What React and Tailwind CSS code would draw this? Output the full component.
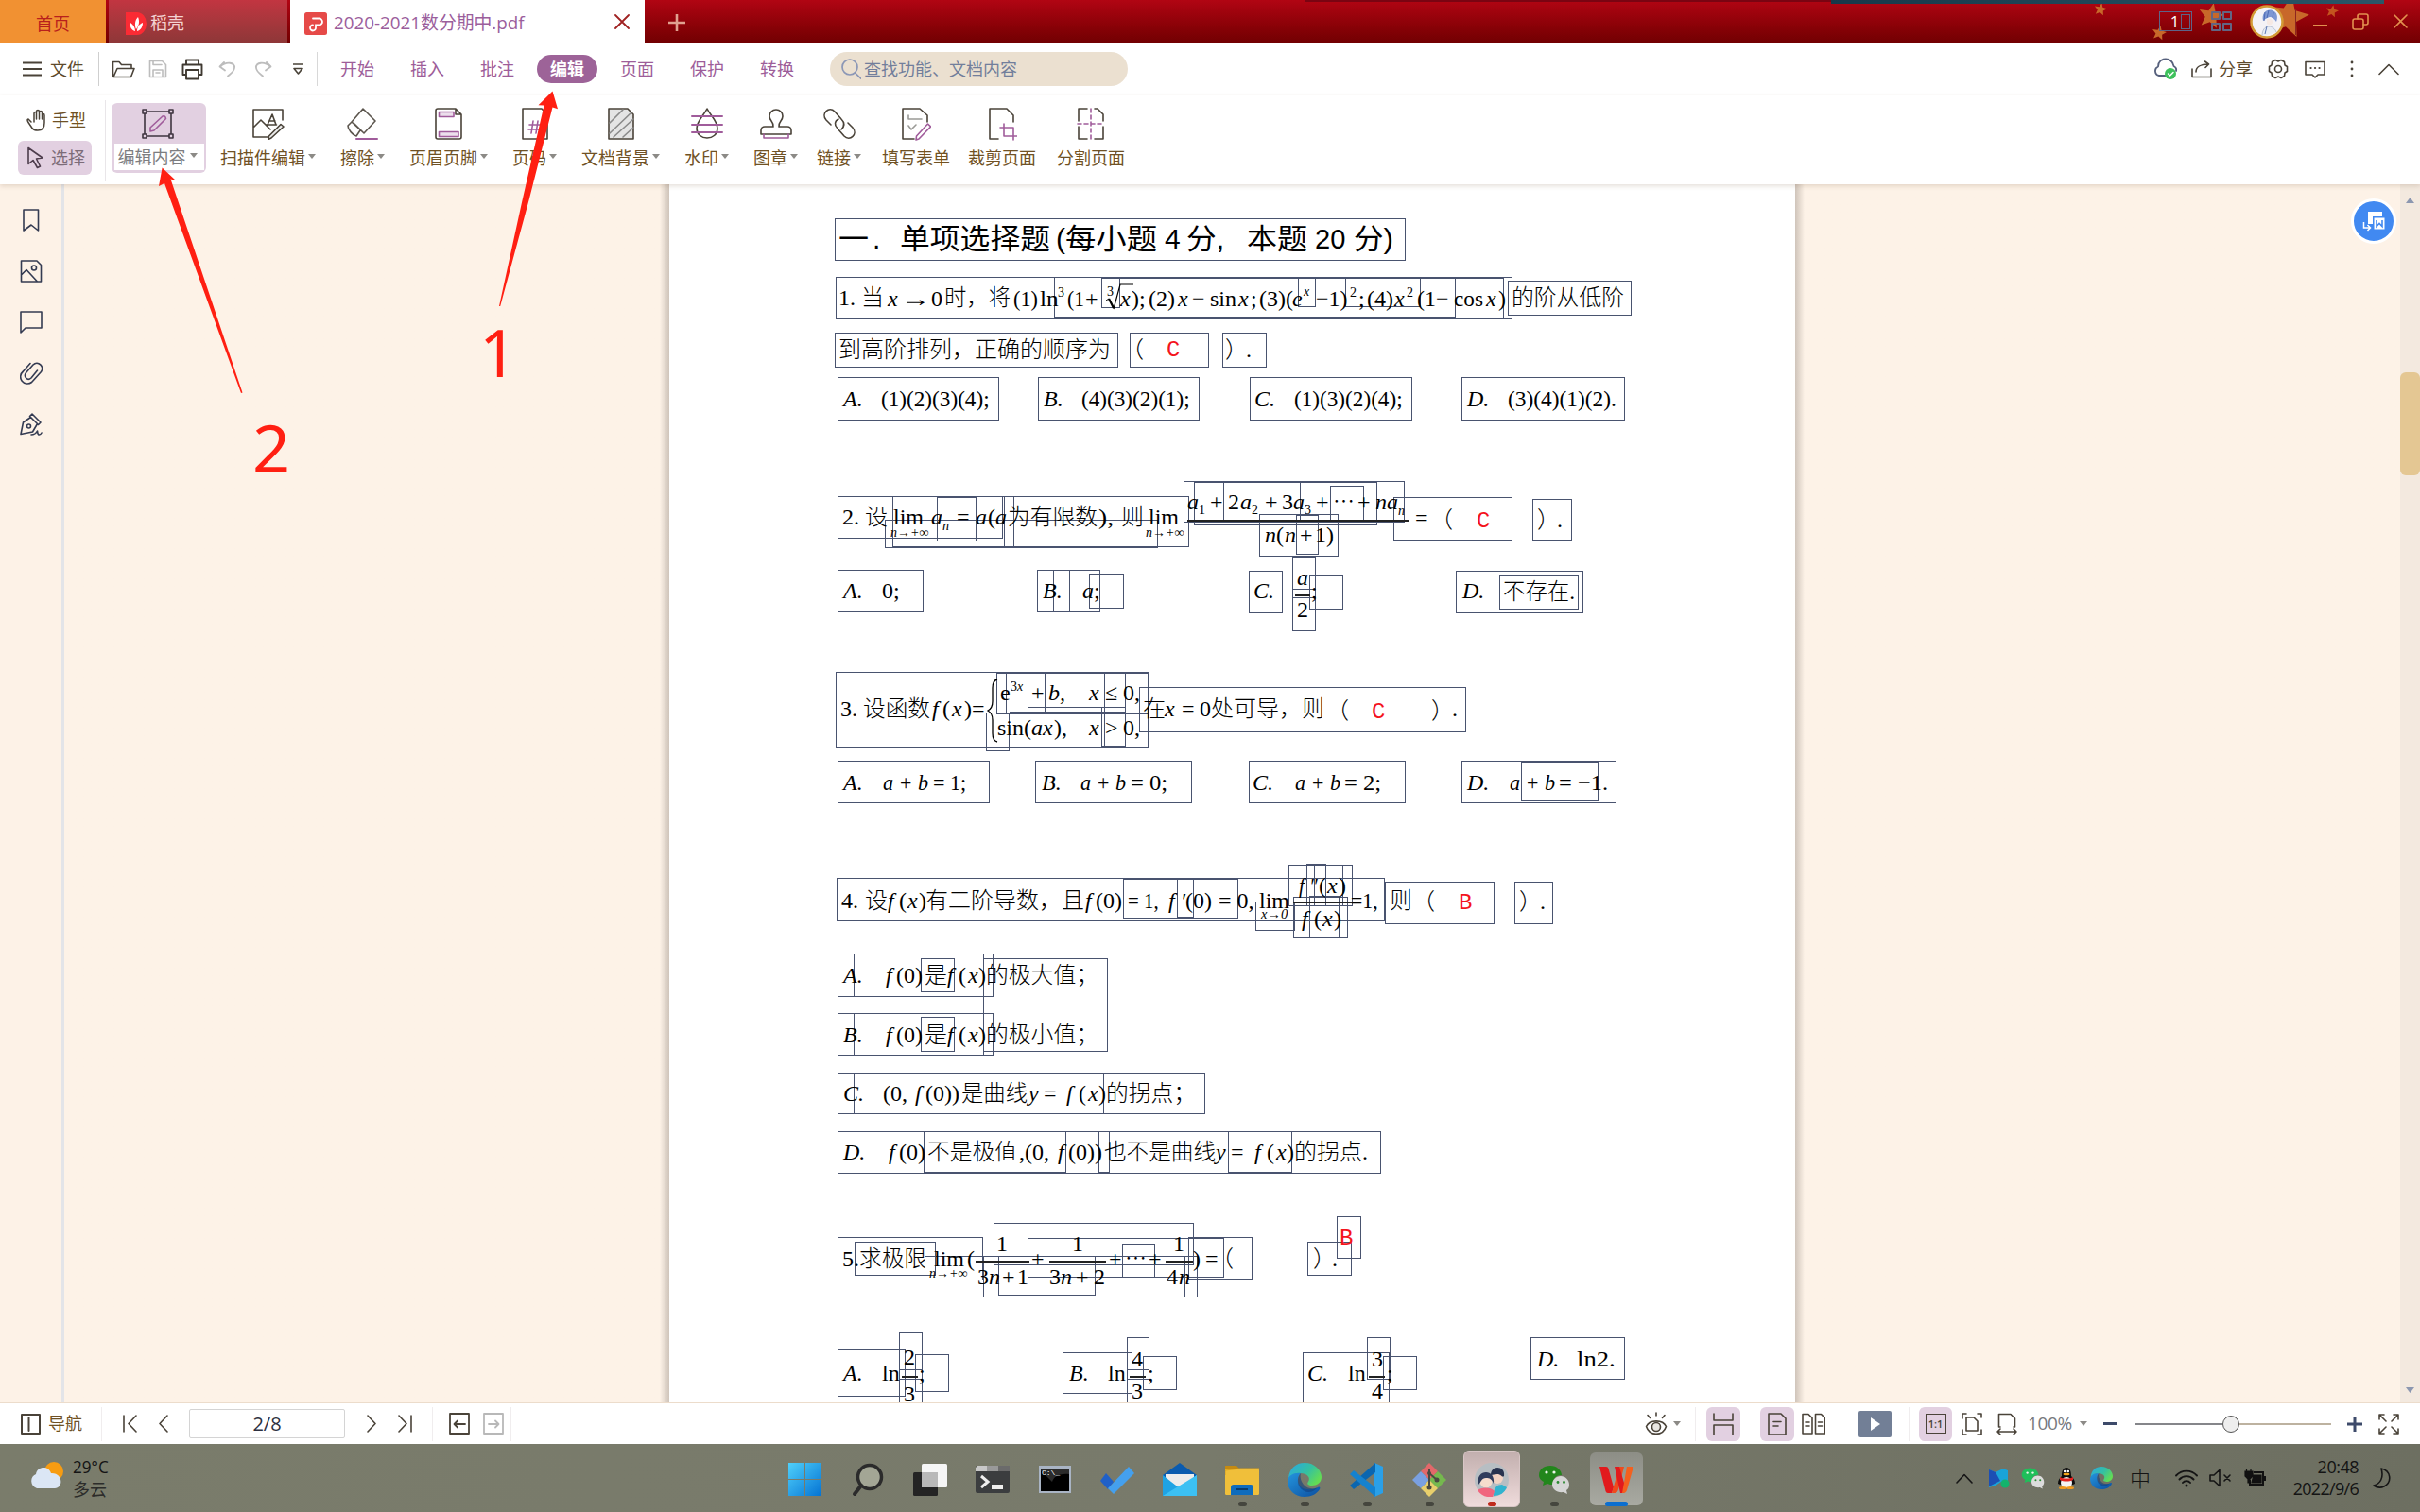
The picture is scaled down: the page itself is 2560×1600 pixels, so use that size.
import React, { useLayoutEffect, useRef } from "react";

const UI = "font-['Open_Sans','Noto_Sans_CJK_SC',sans-serif]";

/* ---------- shared helpers ---------- */

function Ico({ w = 24, h = 24, c = "#4a4339", sw = 1.6, children, className = "" }) {
  return (
    <svg width={w} height={h} viewBox={`0 0 ${w} ${h}`} fill="none" stroke={c} strokeWidth={sw} strokeLinejoin="round" strokeLinecap="round" className={"shrink-0 " + className}>
      {children}
    </svg>
  );
}

function useFit(w) {
  const ref = useRef(null);
  useLayoutEffect(() => {
    const el = ref.current;
    if (!w || !el) return;
    el.style.transform = `scaleX(${w / el.offsetWidth})`;
  }, [w]);
  return ref;
}

function Fit({ w, className = "", children }) {
  const ref = useFit(w);
  return (
    <span ref={ref} className={"inline-block origin-left whitespace-nowrap " + className}>
      {children}
    </span>
  );
}

const Caret = ({ className = "" }) => (
  <svg width="8" height="5" viewBox="0 0 8 5" className={"shrink-0 " + className}><path d="M0 0h8L4 5z" fill="#8c8a86" /></svg>
);

/* ---------- title bar ---------- */

const STARS = [[2222, 10, 7], [2284, 35, 8], [2339, 17, 14], [2420, 18, 23], [2467, 12, 7]];
const starPath = (cx, cy, r) =>
  Array.from({ length: 10 }, (_, i) => {
    const a = (Math.PI / 5) * i - Math.PI / 2 + 0.2;
    const q = i % 2 ? r * 0.45 : r;
    return `${cx + q * Math.cos(a)},${cy + q * Math.sin(a)}`;
  }).join(" ");

function TitleBar() {
  return (
    <div className="relative flex h-[45px] shrink-0 bg-linear-to-b from-[#b10513] to-[#720002]">
      <svg width="500" height="45" viewBox="2060 0 500 45" className="absolute right-0 top-0">
        {STARS.map((s, i) => <polygon key={i} points={starPath(...s)} fill={i === 4 ? "#c4541f" : "#c8682a"} />)}
      </svg>
      <div className="absolute left-[1381px] top-0 h-[2px] w-[556px] bg-[#7a0412]" />
      <div className="absolute left-[1937px] top-0 h-[4px] w-[585px] bg-linear-to-r from-[#17384a] to-[#2a5668]" />
      <div className="flex w-[112px] items-center justify-center bg-[#f19132] pt-1.5 text-[18px] text-[#b8201c]">首页</div>
      <div className="ml-[3px] flex w-[189px] items-center bg-linear-to-b from-[#c23541] to-[#8e3738] pl-[18px] pt-1">
        <svg width="22" height="24" viewBox="0 0 22 24" className="shrink-0">
          <path d="M0 0h12a10 12 0 0 1 0 24H0z" fill="#fb2b34" />
          <path d="M10 20c-4-1-6-5-5-9 3 2 5 5 5 9zM11 18c-2-5-1-10 2-13 2 5 1 9-2 13zM12 20c0-5 3-8 6-9 0 4-2 8-6 9z" fill="#fff" />
        </svg>
        <span className="ml-1 text-[18px] text-[#f4d3d3]">稻壳</span>
      </div>
      <div className="ml-[3px] flex w-[375px] items-center bg-white pl-[15px] pt-1">
        <svg width="24" height="24" viewBox="0 0 24 24" className="shrink-0">
          <rect width="24" height="24" rx="2.5" fill="#e64a48" />
          <path d="M8 5.500h6.500a3.500 3.500 0 0 1 0 7H11v2.500a3 3 0 1 1-3-2.500" fill="none" stroke="#fff" strokeWidth="1.8" strokeLinecap="round" transform="translate(1 1)" />
        </svg>
        <Fit w={202} className="ml-[7px] text-[19px] text-[#9b5e9c]">2020-2021数分期中.pdf</Fit>
        <Ico w={16} h={16} c="#a02222" sw={1.8} className="-mt-1 ml-auto mr-[16px]"><path d="M1 1l14 14M15 1L1 15" /></Ico>
      </div>
      <Ico w={20} h={20} c="#e0a190" sw={2.6} className="ml-6 mt-[14px]"><path d="M10 1v18M1 10h18" strokeLinecap="butt" /></Ico>
      <div className="relative ml-auto flex items-center pr-[13px]">
        <div className="relative flex h-[21px] w-[35px] items-center justify-center border border-[#5d6488] text-[17px] text-white">
          <span className="pr-0.5">1</span>
          <span className="absolute right-px top-0.5 h-4 w-[10px] border border-[#5d6488]" />
        </div>
        <Ico w={22} h={21} c="#626584" sw={2} className="ml-5"><path d="M1 1h8v7H1zM13 1h8v7h-8zM1 13h8v7H1zM13 13h8v7h-8z" /></Ico>
        <svg width="36" height="36" viewBox="0 0 36 36" className="ml-[19px] shrink-0">
          <circle cx="18" cy="18" r="16.500" fill="#f4f2f6" stroke="#d39a35" strokeWidth="2.500" />
          <path d="M14 17C12 9 18 4 24 6c5 2 6 7 4 12-2-3-4-5-7-5-3 1-5 2-7 4z" fill="#7d97d3" />
          <path d="M16 8l-1 9M20 6l-2 8M25 8l-1 6" stroke="#4c69b4" />
          <path d="M18 15c4-1 7 1 6 4s-4 3-6 1z" fill="#f6e9e4" />
          <path d="M13 33c0-6 3-10 7-10s7 3 8 6" fill="#e9edf4" stroke="#b7c0d2" />
          <path d="M18 23l-2 8" stroke="#5a75b4" />
        </svg>
        <div className="ml-3 h-7 w-px bg-[#8d2620]" />
        <Ico w={15} h={16} c="#e2914f" sw={1.8} className="ml-[18px]"><path d="M0 12h15" /></Ico>
        <Ico w={18} h={18} c="#e2914f" className="ml-[26px]"><rect x="1" y="6" width="11" height="11" rx="2" /><path d="M6 6V3a2 2 0 0 1 2-2h7a2 2 0 0 1 2 2v7a2 2 0 0 1-2 2h-3" /></Ico>
        <Ico w={15} h={15} c="#e2914f" className="ml-[26px]"><path d="M1 1l13 13M14 1L1 14" /></Ico>
      </div>
    </div>
  );
}

/* ---------- menu row ---------- */

const MENUS = ["开始", "插入", "批注", "编辑", "页面", "保护", "转换"];

function MenuRow() {
  return (
    <div className="flex h-[56px] shrink-0 items-center bg-white text-[18px] text-[#5e4a2c]">
      <Ico w={20} h={16} className="ml-6" sw={1.8}><path d="M0 1.500h20M0 8h20M0 14.500h20" /></Ico>
      <span className="ml-[9px]">文件</span>
      <div className="ml-[15px] h-9 w-px bg-[#cfcfcf]" />
      <Ico w={25} h={20} className="ml-[13px]"><path d="M1.500 18V2.500h6.500l2.500 3H21v4M2 18.500L6 9.500h18L20.500 18.500z" /></Ico>
      <Ico w={20} h={20} c="#bdbdbd" className="ml-[14px]"><path d="M1.500 1.500h13l4 4v13h-17zM5 1.500v4h9M5 18.500V11h10v7.500M8 14h4" /></Ico>
      <Ico w={23} h={23} c="#3f3931" sw={1.9} className="ml-[15px]"><path d="M5 6V1.500h13V6M5 17H1.500V6.500h20V17H18M5 12h13v9.500H5z" /></Ico>
      <Ico w={19} h={18} c="#bdbdbd" sw={1.8} className="ml-[16px]"><path d="M6 2L1.500 6.500 7 10.500M2 6.500C8 1 18 1.500 17 8c-.500 4-4 6-7 8.500" /></Ico>
      <Ico w={19} h={18} c="#bdbdbd" sw={1.8} className="ml-[19px]"><path d="M13 2l4.500 4.500L12 10.500M17 6.500C11 1 1 1.500 2 8c.500 4 4 6 7 8.500" /></Ico>
      <Ico w={11} h={12} className="ml-[22px]"><path d="M0 1h11M1 5.500h9L5.500 11z" /></Ico>
      <div className="ml-[14px] h-9 w-px bg-[#d8d8d8]" />
      <div className="ml-[5px] flex">
        {MENUS.map((m) => (
          <div key={m} className="flex w-[74px] justify-center">
            {m === "编辑" ? (
              <span className="flex h-[30px] w-[64px] items-center justify-center rounded-full bg-[#9d6398] font-bold text-white">{m}</span>
            ) : (
              <span className="flex h-[30px] items-center text-[#9d5d99]">{m}</span>
            )}
          </div>
        ))}
      </div>
      <div className="ml-[19px] flex h-9 w-[315px] items-center rounded-full bg-[#ebe0d0] pl-3 text-[#727e9b]">
        <Ico w={21} h={22} c="#8b97b6" sw={1.7}><circle cx="9" cy="9" r="8" /><path d="M14.500 15l6 6" /></Ico>
        <span className="ml-[3px]">查找功能、文档内容</span>
      </div>
      <Ico w={26} h={24} c="#56607c" sw={1.8} className="ml-auto">
        <path d="M13 19H6a5 5 0 0 1-1-9.500C5 4 9 1.500 13 1.500s8 3 8.500 7.500c2 1 3 3 2.500 5" />
        <circle cx="18" cy="17" r="6" fill="#3ec15c" stroke="none" /><path d="M15.500 17l2 2 3.500-3.500" stroke="#fff" strokeWidth="1.500" />
      </Ico>
      <Ico w={22} h={19} className="ml-[14px]"><path d="M1 9v8.500h20V9M5 12c0-5 5-8 13-8M14.500 1L18.500 4l-3.500 3.500" /></Ico>
      <span className="ml-[7px]">分享</span>
      <Ico w={22} h={22} className="ml-[16px]"><path d="M8 1.500l3 1.500 3-1.500 3.500 2 .500 3.500 2.500 1.500v5L18 15l-.500 3.500-3.500 2-3-1.500-3 1.500-3.500-2L4 15l-2.500-1.500v-5L4 7l.500-3.500z" /><circle cx="11" cy="11" r="3.500" /></Ico>
      <Ico w={22} h={19} className="ml-[17px]"><path d="M1 1.500h20V15h-7l-3 3-3-3H1z" /><path d="M6.500 8h.100M11 8h.100M15.500 8h.100" strokeWidth="2.200" /></Ico>
      <Ico w={4} h={18} sw={2.800} className="ml-[26px]"><path d="M2 2h.010M2 9h.010M2 16h.010" /></Ico>
      <Ico w={22} h={13} className="ml-[26px] mr-[22px]"><path d="M1 11.500L11 1.500l10 10" /></Ico>
    </div>
  );
}

/* ---------- ribbon ---------- */

const P = "#a05c9b";
const RIBBON = [
  { t: "扫描件编辑", caret: true, box: "w-[102px]", icon: <Ico w={36} h={34}><path d="M18 31H2V2h31v11M2 21l8-8 10 10M17 18l5-11 4 11M15.500 18h11M19 14h6" /><path d="M21 32l-3 1.500.500-3.500L31 17.500l3 2.500z" fill="#ececec" /></Ico> },
  { t: "擦除", caret: true, box: "ml-[25px] w-[47px]", icon: <Ico w={36} h={34} c="#5c564e"><path d="M18 1l13 13-12 13L6 15zM6 15l-4 4c0 4 5 10 9 11l4-6M9 17l9 9" /><path d="M11 33h22" stroke={P} strokeWidth="2" /></Ico> },
  { t: "页眉页脚", caret: true, box: "ml-[26px] w-[83px]", icon: <Ico w={30} h={34}><path d="M3 1h19l6 6v24a2 2 0 0 1-2 2H3a2 2 0 0 1-2-2V3a2 2 0 0 1 2-2zM22 1v6h6" /><path d="M4.500 4.500H20v5H4.500zM4.500 25.500H25v5H4.500z" stroke={P} fill="#ecdfec" /></Ico> },
  { t: "页码", caret: true, box: "ml-[26px] w-[47px]", icon: <Ico w={30} h={34}><path d="M2 1h20l6 6v26H2z" /><path d="M13 14l-2 13M18 14l-2 13M9 18h12M8 23h12" stroke={P} /></Ico> },
  { t: "文档背景", caret: true, box: "ml-[26px] w-[83px]", icon: <Ico w={30} h={34}><path d="M2 1h20l6 6v26H2z" fill="#e4e4e4" /><path d="M3 16L17 2M3 27L26 5M7 31L28 12M17 31l11-10" stroke="#8a8a8a" /></Ico> },
  { t: "水印", caret: true, box: "ml-[26px] w-[47px]", icon: <Ico w={36} h={34}><path d="M18 1c4 8 11 13 11 21 0 6-5 10-11 10S7 28 7 22C7 14 14 9 18 1z" /><path d="M2 9h32M2 18h32M2 26h32" stroke={P} strokeWidth="2" /></Ico> },
  { t: "图章", caret: true, box: "ml-[26px] w-[47px]", icon: <Ico w={36} h={34}><path d="M15 20c1-5-4-6-4-11 0-4 3-7 7-7s7 3 7 7c0 5-5 6-4 11h9a4 4 0 0 1 4 4v4H2v-4a4 4 0 0 1 4-4z" /><path d="M5 28v4h26v-4" stroke={P} /></Ico> },
  { t: "链接", caret: true, box: "ml-[20px] w-[47px]", icon: <Ico w={36} h={34}><path d="M9 18l-5-5C-2 6 7-2 13 4l7 8c4 4 3 8 0 11M27 16l5 5c6 7-3 15-9 9l-7-8c-4-4-3-8 1-10" /></Ico> },
  { t: "填写表单", box: "ml-[22px] w-[72px]", icon: <Ico w={32} h={35}><path d="M14 33H2V1h18l8 7v7" /><path d="M8 8v4h14M8 19l3 4 5-5" stroke="#9a9a96" /><path d="M19 33l-3 1 .500-4 12-13 3 3z" stroke={P} /></Ico> },
  { t: "裁剪页面", box: "ml-[19px] w-[72px]", icon: <Ico w={32} h={35}><path d="M12 33H3V1h18l7 7v7" /><path d="M18 17v13h14M14 21h14v13" stroke={P} /></Ico> },
  { t: "分割页面", box: "ml-[22px] w-[72px]", icon: <Ico w={30} h={34}><path d="M11 1H2v13M2 20v13h9M19 1h3l6 6v7M28 20v13h-9" /><path d="M15 1v32M1 17h28" stroke={P} strokeDasharray="4 3" /></Ico> },
];

function Ribbon() {
  return (
    <div className="z-10 flex h-[94px] shrink-0 bg-white text-[18px] text-[#6f5124] shadow-[0_2px_5px_rgba(110,80,50,0.18)]">
      <div className="ml-[19px] flex w-[78px] flex-col">
        <div className="mt-2 flex h-[36px] items-center pl-2">
          <Ico w={22} h={24} sw={1.5}><path d="M5 14l-3-3c-1.500 0-1 2 0 3.500l4 6c1 1.500 3 2.500 6 2.500 5 0 7-3 7-8V7c0-2-2.500-2-2.500 0v4V4c0-2-3-2-3 0v7V3c0-2-3-2-3 0v8V5c0-2-2.500-2-2.500 0v9" transform="translate(1 0)" /></Ico>
          <span className="ml-[6px]">手型</span>
        </div>
        <div className="mt-[4px] flex h-[36px] items-center rounded-md bg-[#e2d0e1] pl-[9px]">
          <Ico w={20} h={24} c="#4d3c4c"><path d="M2 1.500v17l5-4 4.500 8 3-1.500-4-8L17 12z" /></Ico>
          <span className="ml-[6px] text-[#7c6c78]">选择</span>
        </div>
      </div>
      <div className="ml-[14px] mt-[5px] h-[86px] w-px bg-[#e9e6e9]" />
      <div className="ml-[6px] mt-2 flex h-[74px] w-[100px] flex-col items-center rounded-md bg-[#e2d0e1]">
        <Ico w={34} h={32} c="#3f3540" className="-ml-0.5 mb-[5px] mt-[6px]">
          <path d="M3 3h28v26H3z" /><path d="M1 1h4v4H1zM29 1h4v4h-4zM1 27h4v4H1zM29 27h4v4h-4z" fill="#e2d0e1" />
          <path d="M9 24v-4L22 8q3-1 3.500 2.500L13 23z" stroke={P} />
        </Ico>
        <div className="flex h-[28px] w-[95px] items-center bg-white pl-1 text-[#7d7d80]">编辑内容<Caret className="mb-1 ml-[4px]" /></div>
      </div>
      <div className="ml-[15px] flex">
        {RIBBON.map((r) => (
          <div key={r.t} className={"flex flex-col items-center " + r.box}>
            <div className="mt-[12px] flex h-[36px] items-center justify-center">{r.icon}</div>
            <div className="mt-[4px] flex h-[28px] w-full items-center whitespace-nowrap">{r.t}{r.caret && <Caret className="mb-1 ml-[3px]" />}</div>
          </div>
        ))}
      </div>
    </div>
  );
}

/* ---------- document page (free canvas of editable objects) ---------- */

const BOXES = [
  [883, 231, 1487, 276], [884, 293, 1600, 338], [1115, 293, 1540, 336], [1165, 294, 1185, 326], [1179, 294, 1591, 338], [1373, 294, 1392, 325], [1423, 294, 1503, 325], [1595, 297, 1726, 334],
  [883, 352, 1183, 389], [1195, 352, 1279, 389], [1293, 352, 1340, 389],
  [886, 399, 1057, 445], [1098, 399, 1269, 445], [1322, 399, 1494, 445], [1546, 399, 1719, 445],
  [886, 525, 1061, 570], [944, 525, 1073, 579], [991, 526, 1033, 573], [936, 550, 1225, 580], [1062, 525, 1258, 579], [1252, 509, 1486, 553], [1263, 510, 1457, 556], [1294, 509, 1376, 553], [1407, 514, 1443, 551], [1332, 544, 1416, 589], [1371, 545, 1395, 587], [1474, 526, 1600, 572], [1621, 528, 1663, 572],
  [886, 603, 977, 648], [1097, 603, 1164, 648], [1114, 603, 1132, 648], [1152, 607, 1189, 644], [1321, 604, 1357, 649], [1367, 589, 1392, 668], [1367, 623, 1392, 633], [1385, 608, 1421, 645], [1540, 604, 1675, 649], [1586, 608, 1670, 645],
  [884, 711, 1215, 792], [1054, 712, 1191, 756], [1064, 712, 1215, 756], [1105, 712, 1169, 756], [1087, 748, 1169, 792], [1165, 748, 1191, 790], [1043, 754, 1068, 795], [1068, 753, 1191, 755], [1205, 727, 1551, 775],
  [886, 805, 1047, 850], [1095, 805, 1261, 850], [1321, 805, 1487, 850], [1546, 805, 1710, 850], [1609, 806, 1691, 848],
  [885, 929, 1465, 975], [1188, 930, 1310, 972], [1245, 929, 1263, 971], [1328, 954, 1370, 985], [1363, 915, 1431, 959], [1382, 914, 1403, 959], [1390, 915, 1421, 959], [1368, 949, 1426, 993], [1385, 948, 1417, 993], [1465, 933, 1581, 978], [1602, 933, 1643, 978],
  [886, 1009, 1051, 1055], [903, 1009, 1041, 1055], [974, 1014, 1010, 1050], [1040, 1014, 1172, 1113],
  [886, 1072, 1051, 1117], [903, 1072, 1041, 1117], [974, 1076, 1010, 1113],
  [886, 1135, 1275, 1179], [903, 1135, 1168, 1179],
  [886, 1197, 1461, 1242], [977, 1197, 1128, 1241], [1162, 1197, 1174, 1241], [1299, 1197, 1367, 1241],
  [886, 1309, 1040, 1355], [904, 1314, 990, 1350], [978, 1329, 1267, 1373], [1051, 1294, 1263, 1339], [1040, 1329, 1254, 1373], [1056, 1329, 1159, 1371], [1087, 1310, 1295, 1352], [1187, 1316, 1222, 1352], [1257, 1309, 1325, 1354], [1383, 1314, 1430, 1350], [1414, 1287, 1440, 1332],
  [886, 1428, 958, 1478], [951, 1410, 976, 1500], [951, 1449, 976, 1460], [968, 1433, 1004, 1473],
  [1124, 1431, 1198, 1475], [1192, 1415, 1216, 1500], [1192, 1449, 1216, 1460], [1209, 1435, 1245, 1471],
  [1378, 1431, 1470, 1500], [1446, 1415, 1471, 1460], [1463, 1435, 1499, 1471], [1619, 1415, 1719, 1460],
];

/* [text, left, baseline, style, width?]; styles: r roman, i italic, c red answer, h heading, s small roman, n small italic */
const TEXT = [
  ["一", 887, 264, "h", 32], [".", 923, 264, "h"], ["单项选择题", 952, 264, "h", 159], ["(", 1117, 264, "h"], ["每小题", 1127, 264, "h", 97], ["4", 1232, 264, "h"], ["分,", 1255, 264, "h", 40], ["本题", 1319, 264, "h", 64], ["20", 1391, 264, "h", 32], ["分)", 1432, 264, "h", 42],

  ["1.", 887, 324, "r"], ["当", 911, 324, "r"], ["x", 939, 325, "i"], ["→", 953, 325, "r", 31], ["0", 985, 325, "r"], ["时，将", 999, 324, "r", 70], ["(1)", 1072, 325, "r", 26], ["ln", 1100, 325, "r", 20], ["3", 1119, 315, "s"], ["(1", 1129, 325, "r", 18], ["+", 1148, 325, "r"], ["3", 1171, 314, "s"], ["x", 1185, 325, "i"], [");", 1197, 325, "r"],
  ["(2)", 1215, 325, "r"], ["x", 1246, 325, "i"], ["−", 1261, 325, "r"], ["sin", 1280, 325, "r"], ["x", 1310, 325, "i"], [";", 1323, 325, "r"], ["(3)(", 1332, 325, "r", 36], ["e", 1367, 325, "i"], ["x", 1379, 314, "n"], ["−1)", 1392, 325, "r", 34], ["2", 1428, 315, "s"], [";", 1437, 325, "r"], ["(4)", 1446, 325, "r"], ["x", 1475, 325, "i"], ["2", 1488, 315, "s"], ["(1−", 1499, 325, "r"], ["cos", 1538, 325, "r", 31], ["x", 1572, 325, "i"], [")", 1585, 325, "r"], ["的阶从低阶", 1599, 324, "r", 119],
  ["到高阶排列，正确的顺序为", 887, 379, "r", 288], ["（", 1186, 379, "r"], ["C", 1234, 378, "c"], ["）", 1296, 379, "r"], [".", 1318, 379, "r"],
  ["A.", 892, 431, "i"], ["(1)(2)(3)(4);", 932, 431, "r", 115], ["B.", 1104, 431, "i"], ["(4)(3)(2)(1);", 1144, 431, "r", 115], ["C.", 1327, 431, "i"], ["(1)(3)(2)(4);", 1369, 431, "r", 115], ["D.", 1552, 431, "i"], ["(3)(4)(1)(2).", 1595, 431, "r", 115],

  ["2.", 891, 556, "r"], ["设", 915, 556, "r"], ["lim", 945, 556, "r"], ["n→+∞", 942, 569, "n", 40], ["a", 985, 556, "i"], ["n", 997, 562, "n"], ["=", 1012, 556, "r"], ["a", 1032, 556, "i"], ["(", 1045, 556, "r"], ["a", 1053, 556, "i"], ["为有限数", 1066, 556, "r", 95], ["),", 1162, 556, "r", 16], ["则", 1186, 556, "r"], ["lim", 1215, 556, "r"], ["n→+∞", 1212, 569, "n", 40],
  ["a", 1256, 540, "i"], ["1", 1268, 545, "s"], ["+", 1280, 540, "r"], ["2", 1299, 540, "r"], ["a", 1312, 540, "i"], ["2", 1324, 545, "s"], ["+", 1338, 540, "r"], ["3", 1356, 540, "r"], ["a", 1368, 540, "i"], ["3", 1380, 545, "s"], ["+", 1392, 540, "r"], ["⋯", 1410, 540, "r", 23], ["+", 1436, 540, "r"], ["na", 1455, 540, "i"], ["n", 1479, 546, "n"],
  ["n", 1338, 575, "i"], ["(", 1350, 575, "r"], ["n", 1359, 575, "i"], ["+", 1375, 575, "r"], ["1)", 1391, 575, "r"],
  ["=", 1497, 557, "r"], ["（", 1513, 559, "r"], ["C", 1562, 559, "c"], ["）", 1626, 559, "r"], [".", 1647, 559, "r"],
  ["A.", 892, 634, "i"], ["0;", 933, 634, "r"], ["B.", 1103, 634, "i"], ["a", 1145, 634, "i"], [";", 1157, 634, "r"], ["C.", 1326, 634, "i"], ["a", 1372, 620, "i"], ["2", 1372, 654, "r"], [";", 1387, 634, "r"], ["D.", 1547, 634, "i"], ["不存在.", 1590, 635, "r", 76],

  ["3.", 889, 759, "r"], ["设函数", 913, 759, "r", 71], ["f", 986, 759, "i"], ["(", 997, 759, "r"], ["x", 1007, 759, "i"], [")=", 1020, 759, "r"], ["e", 1058, 742, "r"], ["3", 1069, 732, "s"], ["x", 1076, 732, "n"], ["+", 1091, 742, "r"], ["b,", 1109, 742, "i"], ["x", 1152, 742, "i"], ["≤", 1169, 742, "r"], ["0,", 1188, 742, "r"],
  ["sin(", 1055, 779, "r", 36], ["ax", 1091, 779, "i"], ["),", 1115, 779, "r"], ["x", 1152, 779, "i"], [">", 1169, 779, "r"], ["0,", 1188, 779, "r"],
  ["在", 1209, 759, "r"], ["x", 1232, 759, "i"], ["=", 1250, 759, "r"], ["0", 1269, 759, "r"], ["处可导，则", 1281, 759, "r", 120], ["（", 1403, 761, "r"], ["C", 1451, 761, "c"], ["）", 1514, 761, "r"], [".", 1536, 759, "r"],
  ["A.", 892, 837, "i"], ["a + b", 934, 837, "i", 48], ["= 1;", 987, 837, "r", 35], ["B.", 1102, 837, "i"], ["a + b", 1143, 837, "i", 48], ["= 0;", 1196, 837, "r", 39], ["C.", 1325, 837, "i"], ["a + b", 1370, 837, "i", 48], ["= 2;", 1422, 837, "r", 39], ["D.", 1552, 837, "i"], ["a + b", 1597, 837, "i", 48], ["= −1.", 1649, 837, "r", 52],

  ["4.", 890, 962, "r"], ["设", 915, 962, "r"], ["f", 939, 962, "i"], ["(", 951, 962, "r"], ["x", 960, 962, "i"], [")", 972, 962, "r"], ["有二阶导数，且", 979, 962, "r", 168], ["f", 1148, 962, "i"], ["(0)", 1159, 962, "r"], ["= 1,", 1193, 962, "r", 33], ["f ′", 1236, 962, "i", 18], ["(0)", 1254, 962, "r"], ["= 0,", 1289, 962, "r", 38], ["lim", 1332, 962, "r"], ["x→0", 1334, 973, "n", 28],
  ["f ″", 1374, 946, "i", 20], ["(", 1395, 946, "r"], ["x", 1404, 946, "i"], [")", 1416, 946, "r"], ["f", 1377, 981, "i"], ["(", 1390, 981, "r"], ["x", 1399, 981, "i"], [")", 1411, 981, "r"], ["=1,", 1429, 962, "r", 29], ["则", 1470, 962, "r"], ["（", 1494, 963, "r"], ["B", 1543, 963, "c"], ["）", 1607, 963, "r"], [".", 1629, 963, "r"],

  ["A.", 892, 1041, "i"], ["f", 937, 1041, "i"], ["(0)", 948, 1041, "r"], ["是", 978, 1041, "r"], ["f", 1002, 1041, "i"], ["(", 1014, 1041, "r"], ["x", 1024, 1041, "i"], [")", 1035, 1041, "r"], ["的极大值；", 1043, 1041, "r", 119],
  ["B.", 892, 1104, "i"], ["f", 937, 1104, "i"], ["(0)", 948, 1104, "r"], ["是", 978, 1104, "r"], ["f", 1002, 1104, "i"], ["(", 1014, 1104, "r"], ["x", 1024, 1104, "i"], [")", 1035, 1104, "r"], ["的极小值；", 1043, 1104, "r", 119],
  ["C.", 892, 1166, "i"], ["(0,", 934, 1166, "r"], ["f", 968, 1166, "i"], ["(0))", 979, 1166, "r"], ["是曲线", 1017, 1166, "r", 70], ["y", 1088, 1166, "i"], ["=", 1104, 1166, "r"], ["f", 1128, 1166, "i"], ["(", 1141, 1166, "r"], ["x", 1151, 1166, "i"], [")", 1162, 1166, "r"], ["的拐点；", 1170, 1166, "r", 95],
  ["D.", 892, 1228, "i"], ["f", 940, 1228, "i"], ["(0)", 951, 1228, "r"], ["不是极值", 981, 1228, "r", 95], [",", 1078, 1228, "r"], ["(0,", 1084, 1228, "r"], ["f", 1119, 1228, "i"], ["(0))", 1130, 1228, "r"], ["也不是曲线", 1168, 1228, "r", 118], ["y", 1286, 1228, "i"], ["=", 1302, 1228, "r"], ["f", 1327, 1228, "i"], ["(", 1340, 1228, "r"], ["x", 1350, 1228, "i"], [")", 1361, 1228, "r"], ["的拐点.", 1369, 1228, "r", 78],

  ["5.", 891, 1341, "r"], ["求极限", 909, 1341, "r", 71], ["lim", 988, 1341, "r"], ["n→+∞", 983, 1353, "n", 40], ["(", 1023, 1341, "r"], ["1", 1054, 1325, "r"], ["3", 1034, 1360, "r"], ["n", 1046, 1360, "i"], ["+", 1060, 1360, "r"], ["1", 1076, 1360, "r"], ["+", 1091, 1341, "r"], ["1", 1134, 1325, "r"], ["3", 1110, 1360, "r"], ["n", 1122, 1360, "i"], ["+", 1138, 1360, "r"], ["2", 1157, 1360, "r"], ["+", 1173, 1341, "r"], ["⋯", 1190, 1341, "r", 23], ["+", 1215, 1341, "r"], ["1", 1241, 1325, "r"], ["4", 1234, 1360, "r"], ["n", 1247, 1360, "i"], [")", 1262, 1341, "r"], ["=", 1275, 1341, "r"], ["（", 1281, 1341, "r"], ["）", 1389, 1341, "r"], [".", 1409, 1341, "r"], ["B", 1417, 1318, "c"],
  ["A.", 892, 1462, "i"], ["ln", 933, 1462, "r"], ["2", 956, 1445, "r"], ["3", 956, 1484, "r"], [";", 972, 1462, "r"],
  ["B.", 1131, 1462, "i"], ["ln", 1172, 1462, "r"], ["4", 1197, 1447, "r"], ["3", 1197, 1481, "r"], [";", 1214, 1462, "r"],
  ["C.", 1383, 1462, "i"], ["ln", 1426, 1462, "r"], ["3", 1451, 1447, "r"], ["4", 1451, 1481, "r"], [";", 1467, 1462, "r"],
  ["D.", 1626, 1447, "i"], ["ln2.", 1668, 1447, "r", 41],
];

const RULES = [[1256, 550, 235], [1370, 629, 16], [1368, 954, 62], [1032, 1334, 57], [1110, 1334, 60], [1233, 1334, 29], [954, 1456, 17], [1195, 1456, 17], [1448, 1456, 17]];

const STYLES = {
  r: { cls: "font-['Liberation_Serif','Noto_Sans_CJK_SC',serif] font-light", k: 0.3375, s: 24 },
  i: { cls: "font-['Liberation_Serif','Noto_Sans_CJK_SC',serif] italic", k: 0.3375, s: 24 },
  s: { cls: "font-['Liberation_Serif',serif]", k: 0.3375, s: 14 },
  n: { cls: "font-['Liberation_Serif',serif] italic", k: 0.3375, s: 14 },
  h: { cls: "font-['Liberation_Sans','Noto_Sans_CJK_SC',sans-serif] font-normal", k: 0.3465, s: 30 },
  c: { cls: "font-['Liberation_Mono',monospace] text-[#f4141c]", k: 0.2665, s: 24 },
};

function Glyphs({ item }) {
  const [t, x, y, kind, w] = item;
  const st = STYLES[kind];
  const ref = useFit(w);
  return (
    <span ref={ref} className={"absolute origin-left whitespace-pre leading-[0] " + st.cls} style={{ left: x, top: y - st.k * st.s - 0.5, fontSize: st.s }}>
      {t}
    </span>
  );
}

function DocumentPage() {
  return (
    <div className="relative h-full w-[1191px] shrink-0 overflow-hidden bg-white text-black">
      <div className="absolute -left-[708px] -top-[195px] h-[1600px] w-[2560px]">
        {BOXES.map(([a, b, c, d], i) => (
          <div key={i} className="absolute border border-[#49536f]" style={{ left: a, top: b, width: c - a, height: d - b }} />
        ))}
        {TEXT.map((t, i) => <Glyphs key={i} item={t} />)}
        {RULES.map(([x, y, w], i) => <div key={i} className="absolute h-[2px] bg-[#222]" style={{ left: x, top: y, width: w }} />)}
        <svg width="32" height="30" viewBox="1168 299 32 30" className="absolute left-[1168px] top-[299px]" fill="none" stroke="#000">
          <path d="M1170 318l3-2" /><path d="M1173 316l5 10" strokeWidth="2.2" /><path d="M1178 327l7-26h14" strokeWidth="1.2" />
        </svg>
        <svg width="12" height="68" viewBox="0 0 12 68" className="absolute left-[1044px] top-[718px]" fill="none" stroke="#000" strokeWidth="1.3">
          <path d="M11 1C7 2 6 5 6 10v14c0 5-1 8-5 10 4 2 5 5 5 10v14c0 5 1 8 5 9" />
        </svg>
      </div>
    </div>
  );
}

/* ---------- workspace ---------- */

function SideRail() {
  const c = "#343b52";
  return (
    <div className="flex w-[68px] shrink-0 flex-col items-center gap-[30px] border-r-[3px] border-[#e3e4e8] pl-px pt-[26px]">
      <Ico c={c} h={24}><path d="M4 1h15.500v22L12 17l-8 6z" /></Ico>
      <Ico c={c} h={24}><path d="M1.500 1H18l4.500 4.500V23h-21zM1.500 16L7 10.500 18.500 23" /><circle cx="15" cy="8.500" r="2.500" /></Ico>
      <Ico c={c} h={24}><path d="M1 1h22v17H6l-5 5z" /></Ico>
      <Ico c={c} h={24}><path d="M11 1.500L3.500 10a6.500 6.500 0 0 0 9 11.500L22 11c5-6-3-13-8-8L6.500 11.500c-3 4 1.500 9 5.500 5.500L18.500 9" /></Ico>
      <Ico c={c} h={24}><path d="M1 22.500L3.500 10l8-5.500 7 7-5 8.500zM10.500 3.500L13 1l9 9-2.500 2.500M12 23c3 0 5-1 6.500-4 .500 2 0 4 2 4 1.500 0 2-1 2.500-2" /><circle cx="9.500" cy="14" r="2" /></Ico>
    </div>
  );
}

function Workspace() {
  return (
    <div className="flex h-[1290px] shrink-0 border-b border-[#ecdccb] bg-[#fdf2e7]">
      <SideRail />
      <div className="w-[640px] bg-linear-to-l from-[#cfc4ba] via-[#fdf2e7] via-[10px] to-[#fdf2e7]" />
      <DocumentPage />
      <div className="flex flex-1 justify-end bg-linear-to-r from-[#cfc4ba] via-[#fdf2e7] via-[10px] to-[#fdf2e7]">
        <div className="mr-[4px] mt-[15px] flex h-12 w-12 items-center justify-center rounded-full border-[3px] border-white bg-[#4189f1]">
          <svg width="24" height="24" viewBox="0 0 24 24">
            <path d="M6 2h15v5H11v8H6z" fill="#fff" /><path d="M12.500 8.500h11v12h-11z" fill="#fff" />
            <path d="M15 11v6.500l3-3 3 3V11" fill="none" stroke="#4189f1" strokeWidth="1.600" />
            <path d="M1.500 13v6H8M5.500 16l3 3-3 3" fill="none" stroke="#fff" strokeWidth="1.500" />
          </svg>
        </div>
      </div>
      <div className="flex w-[21px] flex-col items-center bg-[#f3e9df]">
        <svg width="9" height="6" className="mt-[14px]"><path d="M0 6h9L4.500 0z" fill="#8c97b0" /></svg>
        <div className="mt-[179px] h-[109px] w-[21px] rounded-md bg-[#e4c793]" />
        <svg width="9" height="6" className="mb-[10px] mt-auto"><path d="M0 0h9L4.500 6z" fill="#8c97b0" /></svg>
      </div>
    </div>
  );
}

/* ---------- status bar ---------- */

function Sep({ className = "" }) {
  return <div className={"h-9 w-px bg-[#f0edee] " + className} />;
}

function StatusBar() {
  return (
    <div className="flex h-[43px] shrink-0 items-center bg-white text-[18px] text-[#6f5124]">
      <Ico w={21} h={22} sw={2} className="ml-[22px]"><path d="M1 1h19v20H1zM8.500 4v14" /></Ico>
      <span className="ml-2">导航</span>
      <Sep className="ml-[20px]" />
      <Ico w={15} h={19} className="ml-[22px]"><path d="M1 1v17M14 1L6 9.500l8 8.500" /></Ico>
      <Ico w={11} h={19} className="ml-[22px]"><path d="M10 1L2 9.500l8 8.500" /></Ico>
      <div className="ml-[22px] flex h-[31px] w-[165px] items-center justify-center rounded-xs border border-[#d4d4d4] text-[20px] text-[#2c3040]">2/8</div>
      <Ico w={11} h={19} className="ml-[23px]"><path d="M1 1l8 8.500L1 18" /></Ico>
      <Ico w={15} h={19} className="ml-[22px]"><path d="M14 1v17M1 1l8 8.500L1 18" /></Ico>
      <Sep className="ml-[21px]" />
      <Ico w={22} h={23} sw={1.8} className="ml-[17px]"><path d="M1 1h20v21H1zM17 12H6M9 8.500L5.500 12 9 15.500" /></Ico>
      <Ico w={22} h={23} sw={1.8} c="#b8b8b8" className="ml-[14px]"><path d="M1 1h20v21H1zM6 12h10M13 8.500l3.500 3.500-3.500 3.500" /></Ico>
      <Sep className="ml-[7px]" />

      <Ico w={24} h={25} className="ml-auto"><path d="M12 1v3M3 3.500l2.500 3M21 3.500L18.500 6.500M1.500 15.500C5 8 19 8 22.500 15.500 19 26 5 26 1.500 15.500z" /><circle cx="12" cy="16" r="4.500" fill="#e9e6e2" /></Ico>
      <Caret className="ml-[6px]" />
      <Sep className="ml-[15px]" />
      <div className="ml-[11px] flex h-9 w-9 items-center justify-center rounded-md bg-[#e2d0e1]"><Ico w={22} h={24}><path d="M1 1v7h20V1M1 23V13h20v10" /></Ico></div>
      <div className="ml-[21px] flex h-9 w-9 items-center justify-center rounded-md bg-[#e2d0e1]"><Ico w={20} h={24}><path d="M1 1h13l5 5v17H1zM6 9.500h8M6 14h5" /></Ico></div>
      <Ico w={25} h={24} className="ml-[8px]"><path d="M1 1.500h6l4 4V22H1zM14.500 1.500h6l4 4V22h-10zM4 10h4M4 14h4M17.500 10h4M17.500 14h4" /></Ico>
      <Sep className="ml-[16px]" />
      <div className="ml-[18px] flex h-[28px] w-[35px] items-center justify-center rounded-xs bg-[#727f96]"><svg width="10" height="14"><path d="M0 0l10 7-10 7z" fill="#fff" /></svg></div>
      <Sep className="ml-[18px]" />
      <div className="ml-[10px] flex h-9 w-[35px] items-center justify-center rounded-md bg-[#e2d0e1]">
        <div className="flex h-[21px] w-[22px] items-center justify-center border-[1.5px] border-[#4a4339] text-[11px] font-semibold leading-none text-[#4a4339]">1:1</div>
      </div>
      <Ico w={22} h={24} className="ml-[10px]"><path d="M1 6V1h4M17 1h4v4M1 18v5h4M17 23h4v-5M5 5h8l4 4v10H5z" /></Ico>
      <Ico w={22} h={24} className="ml-[15px]"><path d="M4 15H2.500V1.500H15l4.500 4.500v9H18M1 20h20M4 17l-3 3 3 3M18 17l3 3-3 3" /></Ico>
      <span className="ml-[11px] w-[48px] text-[19px] tracking-[-0.4px] text-[#77797d]">100%</span>
      <Caret className="ml-[7px]" />
      <div className="ml-[17px] h-[3px] w-[15px] bg-[#3d4a6a]" />
      <div className="ml-[19px] flex w-[207px] items-center">
        <div className="h-[2px] w-[92px] bg-[#85868a]" />
        <div className="h-[18px] w-[18px] rounded-full border border-[#555] bg-[#eeeeee]" />
        <div className="h-[2px] flex-1 bg-[#bdb2a0]" />
      </div>
      <Ico w={16} h={16} c="#3d4a6a" sw={3} className="ml-[17px]"><path d="M8 0v16M0 8h16" strokeLinecap="butt" /></Ico>
      <Ico w={22} h={22} className="ml-[17px] mr-[22px]"><path d="M1 6V1h5M1 1l7 7M16 1h5v5M21 1l-7 7M1 16v5h5M1 21l7-7M21 16v5h-5M21 21l-7-7" /></Ico>
    </div>
  );
}

/* ---------- taskbar ---------- */

const EdgeIcon = ({ s = 36 }) => (
  <svg width={s} height={s} viewBox="0 0 36 36">
    <defs>
      <linearGradient id="eg" x1="0" y1="0" x2="1" y2=".6"><stop stopColor="#2aa7e6" /><stop offset=".6" stopColor="#35c1a0" /><stop offset="1" stopColor="#63dc54" /></linearGradient>
      <linearGradient id="eb" x1="0" y1="0" x2="1" y2="1"><stop stopColor="#2494dd" /><stop offset="1" stopColor="#0c4fa0" /></linearGradient>
    </defs>
    <path d="M1 16C2 6 9 0 18 0c11 0 18 8 18 15 0 6-5 9-10 9-4 0-6-2-4-4 3-5-2-9-8-9C8 11 3 14 1 16z" fill="url(#eg)" />
    <path d="M0 19C1 13 7 10 14 11c-5 4-4 16 7 17 5 1 9-1 11-2 2-1 3 0 2 2-3 5-9 8-16 8C8 36 0 29 0 19z" fill="url(#eb)" />
    <path d="M14 11c-6 6-3 19 8 20 4 0 7-2 10-5-4 2-10 2-14-2-4-4-5-9-4-13z" fill="#123f7e" opacity=".6" />
  </svg>
);

const WeChat = ({ s = 34, a = "#22861c", b = "#d5d5d5" }) => (
  <svg width={s} height={s} viewBox="0 0 34 34">
    <path d="M13 2c7 0 12 5 12 10-7 0-10 5-9 10-2 0-4 0-6-1l-5 2 1-4c-4-2-5-5-5-7C1 6 6 2 13 2z" fill={a} />
    <path d="M24 13c5 0 9 4 9 9 0 3-1 5-3 6l1 4-4-2c-7 1-12-3-12-8s4-9 9-9z" fill={b} />
    <g fill="#e9f5e9"><circle cx="9" cy="9" r="1.600" /><circle cx="17" cy="9" r="1.600" /></g>
    <g fill="#2c8a33"><circle cx="21" cy="19.500" r="1.400" /><circle cx="27.500" cy="19.500" r="1.400" /></g>
  </svg>
);

const APPS = [
  { i: <svg width="36" height="36"><defs><linearGradient id="win" gradientUnits="userSpaceOnUse" x1="0" y1="0" x2="36" y2="36"><stop stopColor="#4fd0fb" /><stop offset="1" stopColor="#0270d2" /></linearGradient></defs><path d="M0 0h17v17H0zM18 0h17v17H18zM0 18h17v17H0zM18 18h17v17H18z" fill="url(#win)" /></svg> },
  { i: <svg width="36" height="36"><circle cx="20" cy="15" r="12.500" fill="#a3a695" stroke="#2b2b2b" strokeWidth="3.500" /><path d="M11 24L4 33" stroke="#2b2b2b" strokeWidth="4" strokeLinecap="round" /></svg> },
  { i: <svg width="36" height="36"><rect x="0" y="10" width="26" height="25" rx="1.500" fill="#242424" /><rect x="9" y="1" width="27" height="25" rx="1.500" fill="#f6f6f6" /><path d="M9 10h17v16H9z" fill="#b9b9b9" /></svg> },
  { i: <svg width="36" height="30"><rect width="36" height="29" rx="2" fill="#3b3d3f" /><path d="M2 0h10v6H0V2z" fill="#c8c8c8" /><path d="M12 0h12v6H12z" fill="#999" /><path d="M24 0h12v6H24z" fill="#6b6b6b" /><path d="M6 11l7 6-7 6" fill="none" stroke="#eee" strokeWidth="3" /><path d="M17 20h12v5H17z" fill="#eee" /></svg> },
  { i: <svg width="34" height="30"><rect width="34" height="29" fill="#a9b4c4" /><rect x="2" y="3" width="30" height="24" fill="#000" /><path d="M2 5q0-2 2-2h28v6C20 8 16 12 14 17z" fill="#2b2b2b" /></svg>, t: "C:\\_" },
  { i: <svg width="36" height="32"><path d="M0 17l6-8 8 9-6 8z" fill="#1f60c8" /><path d="M30 2l6 7-22 22-6-6z" fill="#44a0ee" /></svg> },
  { i: <svg width="36" height="36"><path d="M0 13L18 0l18 13v22H0z" fill="#0a5baf" /><path d="M3 12h30v14H3z" fill="#ececec" /><path d="M0 13l18 14L36 13v22H0z" fill="#1fa3e4" /><path d="M0 35L36 13v22z" fill="#3cc0f3" /></svg> },
  { dot: true, i: <svg width="36" height="34"><path d="M0 2h12l4 4v6H0z" fill="#c48a12" /><rect y="5" width="36" height="28" rx="1.500" fill="#f0bf3a" /><path d="M0 12V7l16-2h20" fill="none" stroke="#d9a21e" /><path d="M6 33v-8q0-3 3-3h18q3 0 3 3v8z" fill="#0f6cbd" /><path d="M12 27h12" stroke="#083c6e" strokeWidth="2" /></svg> },
  { dot: true, i: <EdgeIcon /> },
  { dot: true, i: <svg width="36" height="36"><path d="M26 0l9 4v28l-9 4z" fill="#2aa0e8" /><path d="M27 0v10L4 28l-4-4z" fill="#0a66b0" /><path d="M27 36V26L4 8l-4 4z" fill="#1582cf" /></svg> },
  { dot: true, i: <svg width="36" height="36"><path d="M18 0l9 9-9 9-9-9z" fill="#e2686a" /><path d="M9 9l9 9-9 9-9-9z" fill="#7aa0e0" /><path d="M27 9l9 9-9 9-9-9z" fill="#75b84e" /><path d="M18 18l9 9-9 9-9-9z" fill="#e8cf6c" /><path d="M18 6v20M18 11l8 7" stroke="#4a4a42" strokeWidth="2" /><circle cx="18" cy="26" r="2.500" fill="#4a4a42" /><circle cx="26" cy="18" r="2.500" fill="#4a4a42" /><circle cx="18" cy="11" r="2" fill="#4a4a42" /></svg> },
  { tile: "pink", i: <svg width="36" height="36"><circle cx="18" cy="18" r="18" fill="#b7bec3" /><path d="M20 34c0-8 4-11 9-11l5 3c-2 5-7 9-14 9z" fill="#31b3cf" /><circle cx="24" cy="16" r="6" fill="#f3d3c3" /><path d="M17 13c0-5 3-8 7-8s8 3 7 9c-2 2-3-2-7-2-3 0-5 1-7 1z" fill="#28334f" /><circle cx="12" cy="20" r="6.500" fill="#f6dccd" /><path d="M4 23c-2-9 3-13 8-13s9 4 8 12c-2-5-4-6-8-6-5 0-5 4-8 7z" fill="#303c5c" /><path d="M3 29c3-3 14-4 18 1l-2 6c-6 1-12-1-16-7z" fill="#f0657e" /></svg> },
  { dot: true, i: <WeChat /> },
  { tile: "gray", i: <svg width="36" height="28"><path d="M0 0h7q2 0 2.500 2L15 22l-2 6H9q-2 0-2.500-2z" fill="#e11a1d" /><path d="M13 28L21 0h5L20 24q-1 4-4 4z" fill="#f04a1c" /><path d="M16 0h5l7 24-2 4h-4z" fill="#e11a1d" /><path d="M24 28l5-28h7l-7 25q-1 3-4 3z" fill="#f4601e" /></svg> },
];

function Taskbar() {
  return (
    <div className="flex h-[72px] shrink-0 items-center bg-linear-to-r from-[#7a7c6b] via-[#787a6b] to-[#6d6f61] text-[18px] text-[#141414]">
      <svg width="36" height="30" viewBox="0 0 36 30" className="ml-[31px] mt-[-4px] shrink-0">
        <circle cx="26" cy="10" r="10" fill="#f79c12" />
        <path d="M8 28a8 8 0 0 1-1-15C8 5 20 3 23 12c12-1 14 15 4 16z" fill="#dbe6f5" />
      </svg>
      <div className="ml-[10px] flex w-[60px] flex-col items-start leading-[24px]">
        <Fit w={38}>29°C</Fit>
        <span className="text-[#2c2c2a]">多云</span>
      </div>
      <div className="ml-[682px] flex h-full">
        {APPS.map((a, k) => (
          <div key={k} className="relative flex w-[66px] items-center justify-center">
            {a.tile === "pink" && <div className="absolute left-[3px] top-[7px] h-[60px] w-[60px] rounded-md border border-[#d8c6c6] bg-linear-to-b from-[#c2afae] to-[#f0dcdc]" />}
            {a.tile === "gray" && <div className="absolute left-[5px] top-[9px] h-[56px] w-[56px] rounded-md bg-linear-to-b from-[#8d8e86] to-[#a9aaa2]" />}
            <div className="relative mt-[3px]">{a.i}{a.t && <span className="absolute left-[3px] top-[4px] font-['Liberation_Mono'] text-[8px] leading-none text-white">{a.t}</span>}</div>
            {a.dot && <span className="absolute bottom-[6px] h-[5px] w-[9px] rounded-full bg-[#45463e]" />}
            {a.tile === "pink" && <span className="absolute bottom-[6px] h-[5px] w-[9px] rounded-full bg-[#c02a1c]" />}
            {a.tile === "gray" && <span className="absolute bottom-[6px] h-[5px] w-[24px] rounded-full bg-[#0c6fd0]" />}
          </div>
        ))}
      </div>
      <Ico w={18} h={11} c="#161616" className="ml-auto"><path d="M1 10l8-8.500L17 10" /></Ico>
      <svg width="22" height="22" className="ml-[17px] shrink-0"><path d="M0 2l7 3 8-4 5 2v15l-7-3-6 4-7 2z" fill="#1aa3d8" /><path d="M0 2l7 3 5 9-12 6z" fill="#1c4fb4" /><circle cx="17" cy="17" r="4.500" fill="#13b36c" /></svg>
      <div className="ml-[12px]"><WeChat s={25} a="#1fbf5a" b="#dcdcdc" /></div>
      <svg width="22" height="24" viewBox="0 0 22 24" className="ml-[12px] shrink-0"><path d="M2 18c0-4 2-6 4-8 0-6 2-9 5-9s5 3 5 9c2 2 4 4 4 8l-2 1H4z" fill="#0d0d0d" /><ellipse cx="11" cy="17" rx="6" ry="6" fill="#f3f3f3" /><path d="M4 11c4 2 10 2 14 0v3c-4 2-10 2-14 0z" fill="#e2221f" /><ellipse cx="11" cy="8" rx="3.500" ry="1.300" fill="#f7a81c" /><circle cx="9.200" cy="5" r="1.300" fill="#fff" /><circle cx="12.800" cy="5" r="1.300" fill="#fff" /><ellipse cx="7" cy="22.500" rx="4" ry="1.500" fill="#f09a1e" /><ellipse cx="15" cy="22.500" rx="4" ry="1.500" fill="#f09a1e" /></svg>
      <div className="ml-[14px]"><EdgeIcon s={24} /></div>
      <span className="ml-[18px] text-[22px] font-light">中</span>
      <Ico w={24} h={20} c="#141414" sw={1.900} className="ml-[26px]"><path d="M1 7.500C7 1 17 1 23 7.500M4.500 11.500c4-4.500 11-4.500 15 0M8 15c2-2.500 6-2.500 8 0" /><circle cx="12" cy="18" r="1.500" fill="#141414" stroke="none" /></Ico>
      <Ico w={24} h={20} c="#141414" className="ml-[12px]"><path d="M1 7h4l6-5.500v17L5 13H1zM16 7l6 6M22 7l-6 6" /></Ico>
      <svg width="24" height="20" className="ml-[13px] shrink-0"><path d="M10 4h10v13H6v-5M22 8v5" fill="none" stroke="#111" strokeWidth="2" /><path d="M10 7h8v8H8zM1 3h8v5l-3 3v4H4v-4L1 8zM2.500 0v4M7 0v4" fill="#111" stroke="#111" strokeWidth="1.200" /></svg>
      <div className="ml-[24px] flex w-[73px] flex-col items-end leading-[23px]">
        <span className="text-[18px] tracking-[-0.5px]">20:48</span>
        <span className="whitespace-nowrap text-[18px] tracking-[-0.7px]">2022/9/6</span>
      </div>
      <Ico w={20} h={22} c="#161616" className="ml-[15px] mr-[30px]"><path d="M9 1c10 2 12 14 3 19-4 2-8 1-11-1C8 17 12 11 9 1z" /></Ico>
    </div>
  );
}

/* ---------- annotations drawn over the window ---------- */

function Annotations() {
  return (
    <div className="pointer-events-none absolute inset-0 z-20">
      <svg width="640" height="440" className="absolute left-0 top-0" fill="#ff1f12">
        <polygon points="171.600,177.500 186,191 180.500,189.500 256.500,415.500 255,416 174,194 168,197" />
        <polygon points="584.500,96.500 590,115.300 584.500,113.500 559.500,212 529.200,324 528,324 552.500,212 575.500,111.500 569.500,111.300" />
      </svg>
      <span className="absolute left-[507px] top-[322px] font-['Noto_Sans',sans-serif] text-[70px] leading-[100px] text-[#ff1f12]">1</span>
      <span className="absolute left-[267px] top-[423px] font-['Noto_Sans',sans-serif] text-[70px] leading-[100px] text-[#ff1f12]">2</span>
    </div>
  );
}

export default function App() {
  return (
    <div className={"relative flex h-[1600px] w-[2560px] flex-col overflow-hidden bg-white " + UI}>
      <TitleBar />
      <MenuRow />
      <Ribbon />
      <Workspace />
      <StatusBar />
      <Taskbar />
      <Annotations />
    </div>
  );
}
